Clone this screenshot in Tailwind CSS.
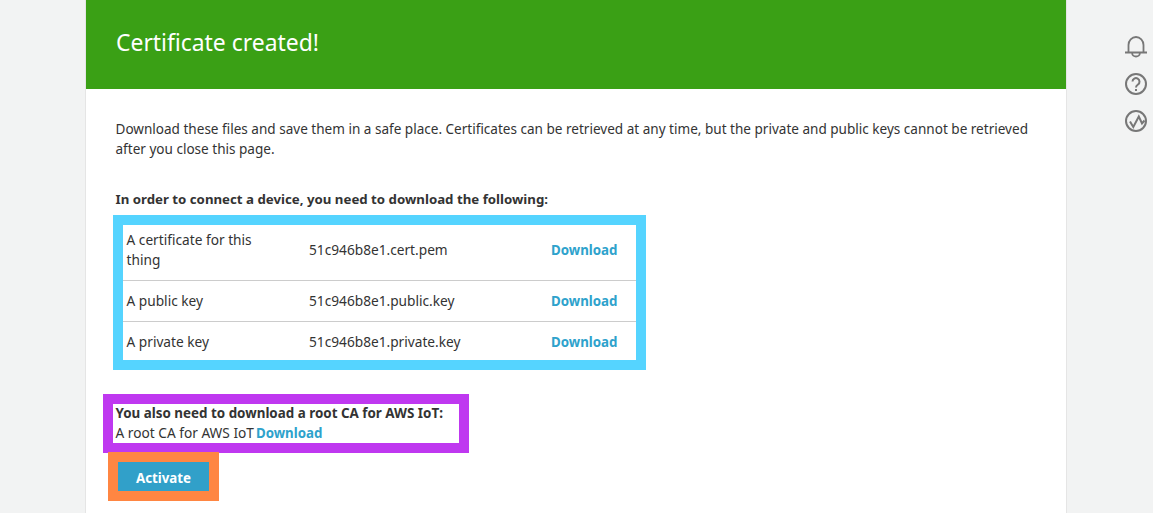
<!DOCTYPE html>
<html lang="en">
<head>
    <meta charset="UTF-8">
    <title>Certificate created</title>
    <script src="https://cdn.jsdelivr.net/npm/@tailwindcss/browser@4"></script>
</head>
<body class="h-[513px] overflow-hidden bg-[#f2f3f3] text-[#333] text-[13.7px] leading-[20px] font-['Noto_Sans',sans-serif]">
    <div class="flex">
        <!-- Main card -->
        <main class="ml-[85px] w-[982px] h-[513px] bg-white border-x border-[#e5e5e5]">
            <header class="h-[89px] bg-[#3aa015] pl-[30px] pt-[27px] text-[22.9px] leading-[32px] text-white">
                Certificate created!
            </header>

            <div class="pl-[29.5px] pt-[30px]">
                <p class="w-[925px] text-[13.55px]">Download these files and save them in a safe place. Certificates can be retrieved at any time, but the private and public keys cannot be retrieved after you close this page.</p>

                <p class="mt-[30px] font-bold text-[13.25px]">In order to connect a device, you need to download the following:</p>

                <!-- Files table -->
                <div class="mt-[16px] ml-[7.5px] w-[513px] bg-white outline-[10px] outline-[#55d4ff]">
                    <div class="flex items-center h-[56px] pb-[5px] border-b border-[#ccc] pl-[3.5px]">
                        <span class="w-[182.5px] pr-[40px]">A certificate for this thing</span>
                        <span class="w-[242px]">51c946b8e1.cert.pem</span>
                        <a class="font-bold text-[13.3px] text-[#2ea2cc]">Download</a>
                    </div>
                    <div class="flex items-center h-[41px] border-b border-[#ccc] pl-[3.5px]">
                        <span class="w-[182.5px]">A public key</span>
                        <span class="w-[242px]">51c946b8e1.public.key</span>
                        <a class="font-bold text-[13.3px] text-[#2ea2cc]">Download</a>
                    </div>
                    <div class="flex items-center h-[38px] pt-[2px] pl-[3.5px]">
                        <span class="w-[182.5px]">A private key</span>
                        <span class="w-[242px]">51c946b8e1.private.key</span>
                        <a class="font-bold text-[13.3px] text-[#2ea2cc]">Download</a>
                    </div>
                </div>

                <!-- Root CA -->
                <div class="flow-root mt-[44px] -ml-[2.5px] w-[346px] h-[39px] pl-[2.5px] bg-white outline-[10px] outline-[#bf38f0]">
                    <p class="-mt-[1px] font-bold text-[13.4px] whitespace-nowrap">You also need to download a root CA for AWS IoT:</p>
                    <p class="flex">A root CA for AWS IoT<a class="font-bold text-[13.3px] text-[#2ea2cc] ml-[2px]">Download</a></p>
                </div>

                <button class="block mt-[19px] ml-[2.5px] pt-[2px] w-[91px] h-[29px] bg-[#31a0c9] text-white font-bold text-[13.3px] outline-[10px] outline-[#ff8642] relative">Activate</button>
            </div>
        </main>

        <!-- Side icons -->
        <aside class="ml-[57px] pt-[35px] flex flex-col gap-[13px] text-[#777]">
            <svg class="w-[24px] h-[24px]" viewBox="0 0 24 24" fill="none" stroke="currentColor" stroke-width="1.800"><path d="M1 17.500h22M4.500 17.500V10a7.500 8 0 0 1 15 0v7.500M8.200 17.500v1a3.800 3 0 0 0 7.600 0v-1"/></svg>
            <svg class="w-[24px] h-[24px]" viewBox="0 0 24 24" fill="none" stroke="currentColor" stroke-width="2"><circle cx="12" cy="12" r="10"/><path d="M8.500 9.500a3.500 3.500 0 1 1 5.500 3c-1.300.9-2 1.500-2 3"/><path d="M12 17v2"/></svg>
            <svg class="w-[24px] h-[24px]" viewBox="0 0 24 24" fill="none" stroke="currentColor" stroke-width="2"><circle cx="12" cy="12" r="10"/><path d="M6 12.500l3.300 5.500 5.500-10.500 3.200 7 2.500-3"/></svg>
        </aside>
    </div>
</body>
</html>
